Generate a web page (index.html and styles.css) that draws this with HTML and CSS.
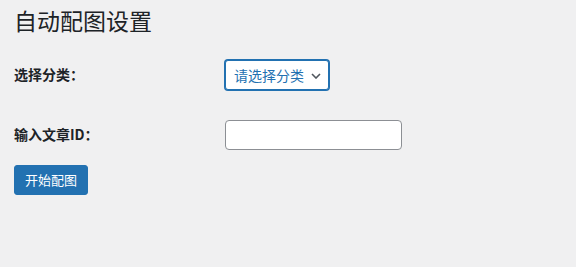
FILE: index.html
```html
<!DOCTYPE html>
<html lang="zh-CN">
<head>
<meta charset="utf-8">
<title>自动配图设置</title>
<link rel="stylesheet" href="styles.css">
</head>
<body>
<div class="wrap">
  <h1 class="title">自动配图设置</h1>
  <form class="form">
    <div class="row row-first">
      <label class="label" for="cat">选择分类：</label>
      <div class="select-wrap">
        <select id="cat" class="select">
          <option>请选择分类</option>
        </select>
        <svg class="chev" width="10" height="6" viewBox="0 0 10 6"><path d="M1 1 L5 5 L9 1" fill="none" stroke="#50575e" stroke-width="1.6"/></svg>
      </div>
    </div>
    <div class="row">
      <label class="label" for="pid">输入文章ID：</label>
      <input id="pid" class="input" type="text">
    </div>
    <div class="actions">
      <button type="button" class="button">开始配图</button>
    </div>
  </form>
</div>
</body>
</html>
```
FILE: styles.css
```css
html, body {
  margin: 0;
  padding: 0;
  background: #f0f0f1;
}
body {
  font-family: "Noto Sans CJK SC", "Noto Sans", sans-serif;
  color: #1d2327;
  font-size: 14px;
}
.wrap {
  padding: 5px 14px 0;
}
.title {
  font-size: 23px;
  font-weight: 400;
  line-height: 30px;
  margin: 0;
  padding: 0;
  color: #1d2327;
}
.form {
  display: flex;
  flex-direction: column;
}
.row {
  display: grid;
  grid-template-columns: 211px auto;
  align-items: center;
  height: 30px;
}
.row-first {
  margin-top: 25px;
  margin-bottom: 30px;
}
.label {
  font-size: 14px;
  font-weight: 700;
  line-height: 20px;
  margin-top: -3px;
}
.select-wrap {
  position: relative;
  width: 104px;
  height: 30px;
}
.select {
  appearance: none;
  -webkit-appearance: none;
  box-sizing: border-box;
  width: 104px;
  height: 30px;
  margin: 0;
  padding: 0 24px 0 8px;
  border: 1px solid #2271b1;
  box-shadow: 0 0 0 1px #2271b1;
  border-radius: 3px;
  background: #fff;
  color: #2271b1;
  font-family: inherit;
  font-size: 14px;
  outline: none;
}
.chev {
  position: absolute;
  left: 86px;
  top: 13px;
  pointer-events: none;
}
.input {
  box-sizing: border-box;
  width: 177px;
  height: 30px;
  margin: 0;
  padding: 0 8px;
  border: 1px solid #8c8f94;
  border-radius: 4px;
  background: #fff;
  font-family: inherit;
  font-size: 14px;
}
.actions {
  margin-top: 15px;
}
.button {
  box-sizing: border-box;
  height: 30px;
  width: 74px;
  padding: 0 10px;
  border: 1px solid #2271b1;
  border-radius: 3px;
  background: #2271b1;
  color: #fff;
  font-family: inherit;
  font-size: 13px;
  line-height: 28px;
  cursor: pointer;
}
```
